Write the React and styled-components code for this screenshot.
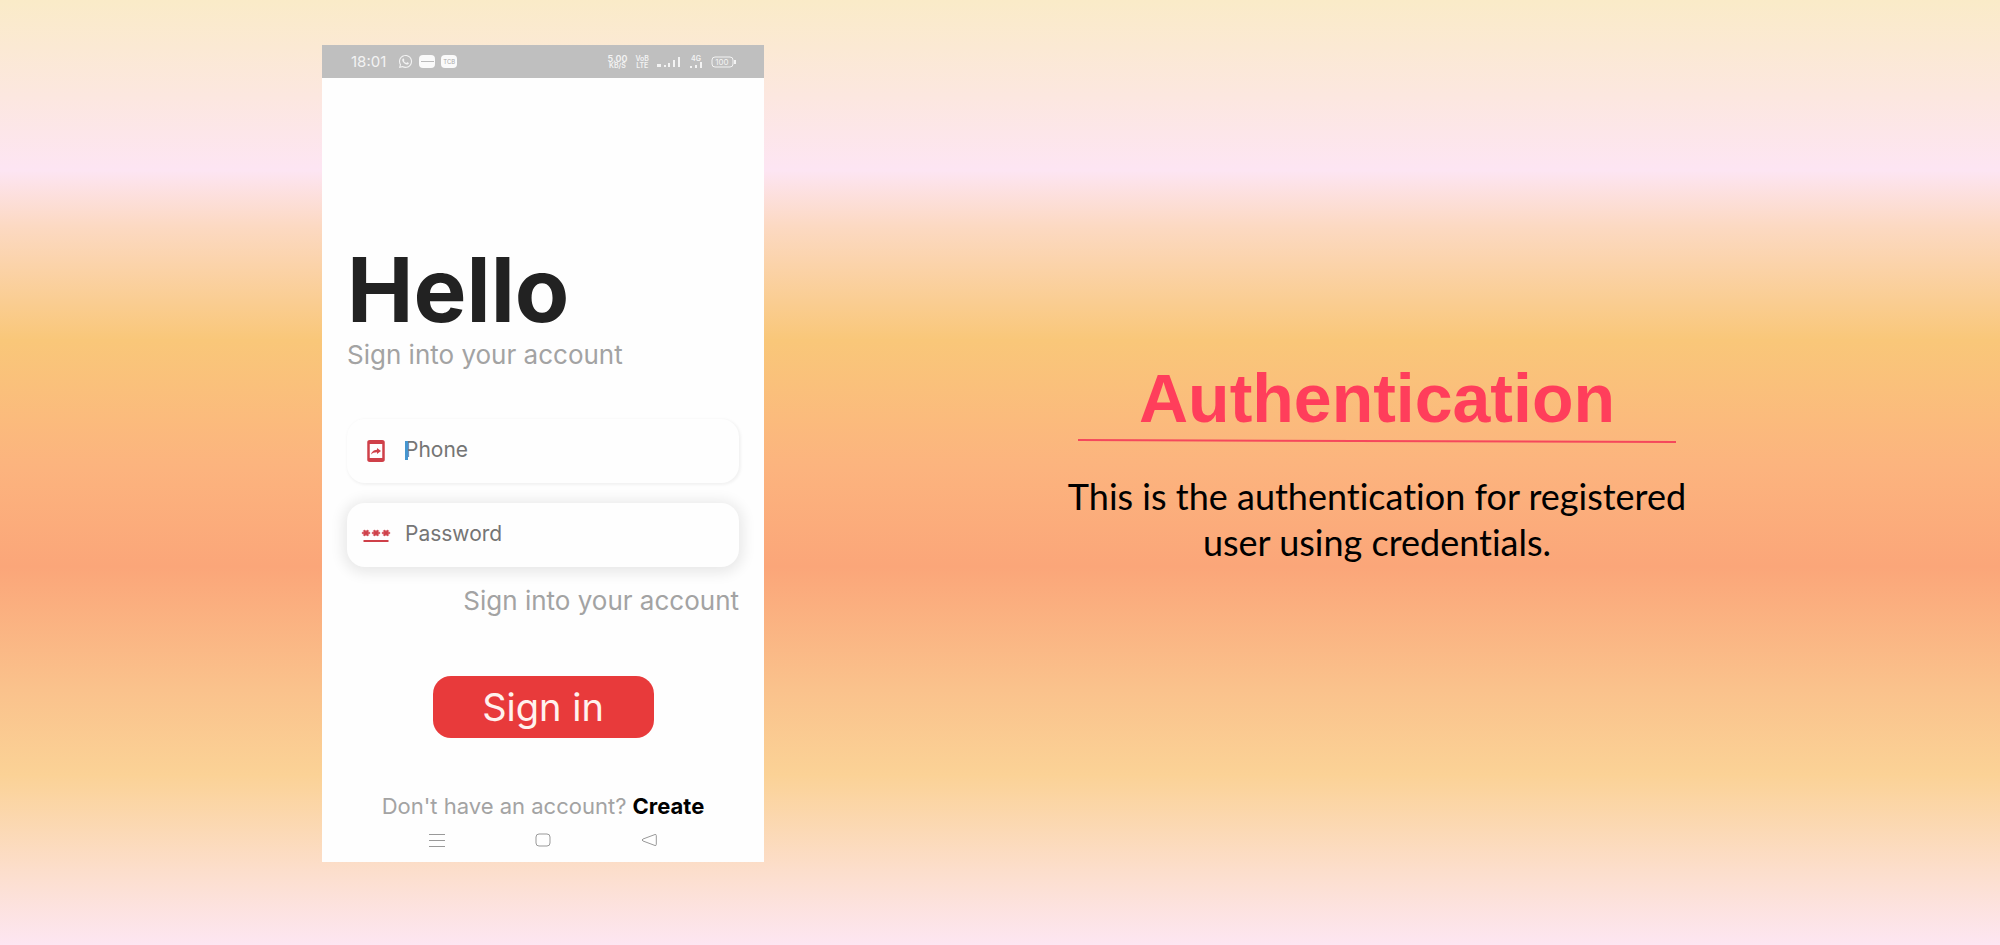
import React from "react";
import styled, { createGlobalStyle } from "styled-components";
import { FaWhatsapp } from "react-icons/fa";

const GlobalStyle = createGlobalStyle`
  *, *::before, *::after { box-sizing: border-box; }
  body { margin: 0; font-family: Inter, Roboto, sans-serif; }
`;

const Page = styled.main`
  min-height: 100vh;
  display: grid;
  grid-template-columns: minmax(0, 442fr) minmax(0, 1226fr);
  align-items: start;
  padding: 45px 10px 83px 16.1%;
  background: linear-gradient(
    180deg,
    #faebc8 0%,
    #fce7df 10%,
    #fde5f3 18%,
    #fcd9c2 24%,
    #f9c779 36%,
    #fcb47e 49%,
    #fba679 60%,
    #fac28c 73%,
    #fbd296 82%,
    #fcdfd0 93%,
    #fde6f2 100%
  );
`;

const Phone = styled.section`
  display: flex;
  flex-direction: column;
  background: #fefefe;
`;

const StatusBar = styled.div`
  height: 33px;
  padding: 0 28px 0 29px;
  display: flex;
  align-items: center;
  justify-content: space-between;
  background: #bfbfbf;
  color: #f3f3f3;
  font-size: 15px;
`;

const StatusGroup = styled.div`
  display: flex;
  align-items: center;
  gap: ${(p) => p.$gap}px;
`;

const Clock = styled.time`
  margin-right: 6px;
`;

const Chip = styled.span`
  width: 16px;
  height: 13px;
  border-radius: 4px;
  background: #fafafa;
  display: grid;
  place-items: center;
  color: #aaa;
  font-size: 6px;
  line-height: 6px;
`;

const Dash = styled.span`
  width: 13px;
  height: 1px;
  background: #bbb;
`;

const Stack = styled.span`
  display: flex;
  flex-direction: column;
  align-items: center;
  font-size: 7px;
  line-height: 7px;
  font-weight: 600;
`;

const Rate = styled.span`
  font-size: 9px;
`;

const Screen = styled.form`
  display: flex;
  flex-direction: column;
  padding: 163px 25px 0;
`;

const Greeting = styled.h1`
  margin: 0;
  font-size: 89px;
  line-height: 98px;
  font-weight: 700;
  color: #222;
`;

const Subtitle = styled.p`
  margin: 0;
  font-size: 26px;
  line-height: 32px;
  color: #a3a3a3;
`;

const Fields = styled.div`
  display: flex;
  flex-direction: column;
  gap: 20px;
  margin-top: 48px;
`;

const Field = styled.label`
  position: relative;
  height: 64px;
  display: flex;
  align-items: center;
  gap: 14px;
  padding: 0 14px;
  border-radius: 18px;
  background: #fefefe;
  box-shadow: ${(p) =>
    p.$raised
      ? "0 2px 14px 4px rgba(0, 0, 0, 0.09)"
      : "1px 1px 3px 1px rgba(0, 0, 0, 0.05)"};
`;

const FieldIcon = styled.svg`
  flex: none;
  width: 30px;
  height: 24px;
  fill: #cf4049;
`;

const Input = styled.input`
  flex: 1;
  min-width: 0;
  padding: 0 0 2px;
  border: 0;
  outline: 0;
  background: transparent;
  font: 400 21px/28px Inter, Roboto, sans-serif;
  color: #333;
  &::placeholder {
    color: #757575;
    opacity: 1;
  }
`;

const Caret = styled.span`
  position: absolute;
  left: 58px;
  top: 22px;
  width: 3px;
  height: 19px;
  background: #4596cf;
`;

const AccountLink = styled.a`
  align-self: flex-end;
  margin-top: 18px;
  font-size: 26px;
  line-height: 32px;
  color: #a3a3a3;
  text-decoration: none;
`;

const SignIn = styled.button`
  align-self: center;
  width: 221px;
  height: 62px;
  margin-top: 59px;
  padding: 0;
  border: 0;
  border-radius: 18px;
  background: #e83a3b;
  color: #fff2ee;
  font: 400 38px/62px Inter, Roboto, sans-serif;
`;

const Register = styled.p`
  margin: 56px 0 0;
  text-align: center;
  white-space: nowrap;
  font-size: 22px;
  line-height: 24px;
  color: #a3a3a3;
`;

const CreateLink = styled.a`
  color: #000;
  font-weight: 700;
  text-decoration: none;
`;

const NavBar = styled.nav`
  height: 44px;
  display: flex;
  align-items: center;
  justify-content: center;
  gap: 90px;
`;

const NavIcon = styled.svg`
  width: 16px;
  height: 14px;
  fill: none;
  stroke: #999;
`;

const Description = styled.section`
  display: flex;
  flex-direction: column;
  align-items: center;
  padding-top: 313px;
  text-align: center;
`;

const Title = styled.h2`
  margin: 0;
  font: 700 68px/80px "Liberation Sans", Arial, sans-serif;
  color: #ff3e5b;
`;

const Rule = styled.svg`
  width: 598px;
  max-width: 100%;
  height: 6px;
`;

const Copy = styled.p`
  max-width: 660px;
  margin: 29px 0 0;
  font: 400 36px/46px Lato, "Open Sans", sans-serif;
  font-variant-ligatures: none;
  color: #000;
`;

const star =
  "l.85-1.48.85 1.48 1.3-.75-.85-1.48H7v-1.5H5.3l.85-1.47L4.85 7 4 8.47 3.15 7l-1.3.75.85 1.47H1v1.5h1.7l-.85 1.48z";

export default function App() {
  return (
    <>
      <GlobalStyle />
      <Page>
        <Phone>
          <StatusBar>
            <StatusGroup $gap={6}>
              <Clock>18:01</Clock>
              <FaWhatsapp size={15} />
              <Chip><Dash /></Chip>
              <Chip>TCB</Chip>
            </StatusGroup>
            <StatusGroup $gap={8}>
              <Stack>
                <Rate>5.00</Rate>
                <span>KB/S</span>
              </Stack>
              <Stack>
                <span>VoB</span>
                <span>LTE</span>
              </Stack>
              <svg width="24" height="12" fill="#f3f3f3" aria-hidden="true">
                <path d="M0 8h4v3H0zM7 9h2v2H7zM11 7h2v4h-2zM16 4h2v7h-2zM21 1h2v10h-2z" />
              </svg>
              <Stack>
                <span>4G</span>
                <svg width="14" height="6" fill="#f3f3f3" aria-hidden="true">
                  <path d="M1 4h2v2H1zM6 3h2v3H6zM11 0h2v6h-2z" />
                </svg>
              </Stack>
              <svg width="25" height="12" aria-hidden="true">
                <rect x="1" y="1" width="21" height="10" rx="3" fill="none" stroke="#f3f3f3" />
                <path d="M23 4h2v4h-2z" fill="#f3f3f3" />
                <text x="11" y="9" fontSize="8" textAnchor="middle" fill="#f3f3f3">100</text>
              </svg>
            </StatusGroup>
          </StatusBar>

          <Screen onSubmit={(e) => e.preventDefault()}>
            <Greeting>Hello</Greeting>
            <Subtitle>Sign into your account</Subtitle>
            <Fields>
              <Field>
                <FieldIcon viewBox="0 0 24 24" preserveAspectRatio="none" aria-hidden="true">
                  <path d="M17 1H7c-1.1 0-1.99.9-1.99 2v18c0 1.1.89 2 1.99 2h10c1.1 0 2-.9 2-2V3c0-1.1-.9-2-2-2zm0 18H7V5h10v14zm-4.2-5.78v1.75l3.2-2.99L12.8 9v1.7c-3.11.43-4.35 2.56-4.8 4.7 1.11-1.5 2.58-2.18 4.8-2.18z" />
                </FieldIcon>
                <Input type="tel" placeholder="Phone" aria-label="Phone" />
                <Caret />
              </Field>
              <Field $raised>
                <FieldIcon viewBox="0 0 24 24" preserveAspectRatio="none" aria-hidden="true">
                  <path d="M2 17h20v2H2z" />
                  {[0, 8, 16].map((x) => (
                    <path
                      key={x}
                      transform={`translate(${x} 0)`}
                      d={`M3.15 12.95${star}`}
                      stroke="#cf4049"
                      strokeWidth=".5"
                    />
                  ))}
                </FieldIcon>
                <Input type="password" placeholder="Password" aria-label="Password" />
              </Field>
            </Fields>
            <AccountLink href="#account">Sign into your account</AccountLink>
            <SignIn type="submit">Sign in</SignIn>
            <Register>
              Don't have an account? <CreateLink href="#create">Create</CreateLink>
            </Register>
          </Screen>

          <NavBar aria-label="System">
            <NavIcon viewBox="0 0 16 14"><path d="M0 1.5h16M0 7.5h16M0 13.5h16" /></NavIcon>
            <NavIcon viewBox="0 0 16 14"><rect x="1" y="1" width="14" height="12" rx="3" /></NavIcon>
            <NavIcon viewBox="0 0 16 14"><path d="M14 1.5 2 6q-2 1 0 2l12 4.500q1.300.3 1.300-1V2.500q0-1.300-1.300-1z" /></NavIcon>
          </NavBar>
        </Phone>

        <Description>
          <Title>Authentication</Title>
          <Rule viewBox="0 0 598 6" preserveAspectRatio="none" aria-hidden="true">
            <path d="M0 2 598 4" stroke="#f5485c" strokeWidth="2" />
          </Rule>
          <Copy>This is the authentication for registered user using credentials.</Copy>
        </Description>
      </Page>
    </>
  );
}
